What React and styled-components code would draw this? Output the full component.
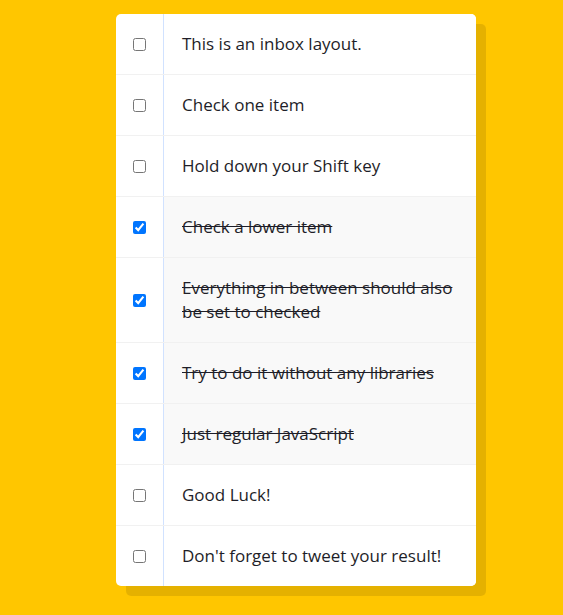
import React, { useState } from "react";
import styled, { createGlobalStyle } from "styled-components";

const GlobalStyle = createGlobalStyle`
  html {
    background: #ffc600;
  }
  body {
    margin: 0;
    font-family: "Open Sans", "Liberation Sans", sans-serif;
  }
`;

const Page = styled.div`
  padding: 14px 0 0 116px;
  min-height: 615px;
  box-sizing: border-box;
`;

const Inbox = styled.div`
  width: 360px;
  background: white;
  border-radius: 5px;
  overflow: hidden;
  box-shadow: 10px 10px 0 rgba(0, 0, 0, 0.1);
`;

const Item = styled.label`
  display: flex;
  align-items: stretch;
  border-bottom: 1px solid #f1f1f1;
  &:last-child {
    border-bottom: 0;
  }
`;

const Check = styled.input`
  margin: 0 17px;
  width: 13px;
  height: 13px;
  align-self: center;
  flex-shrink: 0;
`;

const Text = styled.p`
  margin: 0;
  flex: 1;
  padding: 18px 18px;
  font-size: 17px;
  line-height: 24px;
  font-weight: 400;
  color: #1e1e28;
  border-left: 1px solid #d1e2ff;
  background: ${props => (props.done ? "#f9f9f9" : "white")};
  text-decoration: ${props => (props.done ? "line-through" : "none")};
  transition: background 0.2s;
`;

const items = [
  "This is an inbox layout.",
  "Check one item",
  "Hold down your Shift key",
  "Check a lower item",
  "Everything in between should also be set to checked",
  "Try to do it without any libraries",
  "Just regular JavaScript",
  "Good Luck!",
  "Don't forget to tweet your result!"
];

export default function App() {
  const [checked, setChecked] = useState([false, false, false, true, true, true, true, false, false]);
  const [last, setLast] = useState(null);

  const handleCheck = (i, e) => {
    const next = checked.slice();
    next[i] = e.target.checked;
    if (e.nativeEvent.shiftKey && last !== null && e.target.checked) {
      const [a, b] = [Math.min(i, last), Math.max(i, last)];
      for (let k = a; k <= b; k++) next[k] = true;
    }
    setChecked(next);
    setLast(i);
  };

  return (
    <Page>
      <GlobalStyle />
      <Inbox>
        {items.map((t, i) => (
          <Item key={i}>
            <Check type="checkbox" checked={checked[i]} onChange={e => handleCheck(i, e)} />
            <Text done={checked[i]}>{t}</Text>
          </Item>
        ))}
      </Inbox>
    </Page>
  );
}
